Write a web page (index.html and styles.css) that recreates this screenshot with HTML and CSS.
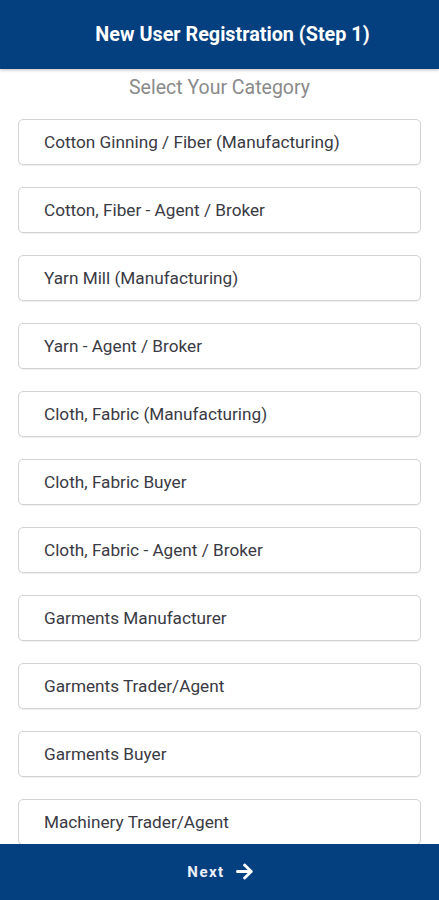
FILE: index.html
```html
<!DOCTYPE html>
<html lang="en">
<head>
<meta charset="utf-8">
<title>New User Registration (Step 1)</title>
<link rel="stylesheet" href="styles.css">
</head>
<body>
<header class="topbar">
  <h1 class="topbar-title">New User Registration (Step 1)</h1>
</header>
<main class="content">
  <p class="subtitle">Select Your Category</p>
  <ul class="category-list">
    <li class="category">Cotton Ginning / Fiber (Manufacturing)</li>
    <li class="category">Cotton, Fiber - Agent / Broker</li>
    <li class="category">Yarn Mill (Manufacturing)</li>
    <li class="category">Yarn - Agent / Broker</li>
    <li class="category">Cloth, Fabric (Manufacturing)</li>
    <li class="category">Cloth, Fabric Buyer</li>
    <li class="category">Cloth, Fabric - Agent / Broker</li>
    <li class="category">Garments Manufacturer</li>
    <li class="category">Garments Trader/Agent</li>
    <li class="category">Garments Buyer</li>
    <li class="category">Machinery Trader/Agent</li>
    <li class="category">Machinery Manufacturer</li>
  </ul>
</main>
<footer class="bottombar">
  <button class="next-btn">Next
    <svg class="next-icon" viewBox="0 0 448 512" width="19" height="19"><path fill="#fff" d="M190.5 66.9l22.2-22.2c9.4-9.4 24.6-9.4 33.9 0L441 239c9.4 9.4 9.4 24.6 0 33.9L246.6 467.3c-9.4 9.4-24.6 9.4-33.9 0l-22.2-22.2c-9.5-9.5-9.300-25 .4-34.3L311.4 296H24c-13.3 0-24-10.7-24-24v-32c0-13.3 10.7-24 24-24h287.4L190.9 101.2c-9.8-9.3-10-24.8-.4-34.3z"/></svg>
  </button>
</footer>
</body>
</html>
```

FILE: styles.css
```css
* { box-sizing: border-box; }

html, body {
  margin: 0;
  padding: 0;
  background: #ffffff;
  font-family: Roboto, "Liberation Sans", Arial, sans-serif;
}

body {
  height: 900px;
  overflow: hidden;
}

.topbar {
  height: 69px;
  background: #043f80;
  display: flex;
  align-items: center;
  justify-content: center;
  padding-left: 26px;
  box-shadow: 0 1px 3px rgba(0, 0, 0, 0.25);
  position: relative;
  z-index: 1;
}

.topbar-title {
  margin: 0;
  color: #ffffff;
  font-size: 19.8px;
  font-weight: 700;
}

.content {
  padding-top: 7px;
}

.subtitle {
  margin: 0;
  text-align: center;
  color: #8a8a8a;
  font-size: 19.5px;
  line-height: 23px;
}

.category-list {
  list-style: none;
  margin: 0;
  padding: 20px 18px 0;
  display: flex;
  flex-direction: column;
  gap: 22px;
}

.category {
  height: 46px;
  border: 1px solid #d2d2d2;
  border-radius: 5px;
  display: flex;
  align-items: center;
  padding-left: 25px;
  color: #3a3a44;
  font-size: 17.2px;
  background: #fff;
  box-shadow: 0 1px 1px rgba(0, 0, 0, 0.06);
}

.bottombar {
  position: fixed;
  left: 0;
  right: 0;
  bottom: 0;
  height: 56px;
  background: #043f80;
  display: flex;
  align-items: center;
  justify-content: center;
}

.next-btn {
  background: none;
  border: 0;
  color: #eef2f8;
  font-family: Roboto, "Liberation Sans", Arial, sans-serif;
  font-size: 15px;
  font-weight: 700;
  letter-spacing: 1.5px;
  display: flex;
  align-items: center;
  gap: 10px;
  padding: 0 0 0 2px;
  margin-top: -1px;
}

.next-icon {
  display: block;
}
```
